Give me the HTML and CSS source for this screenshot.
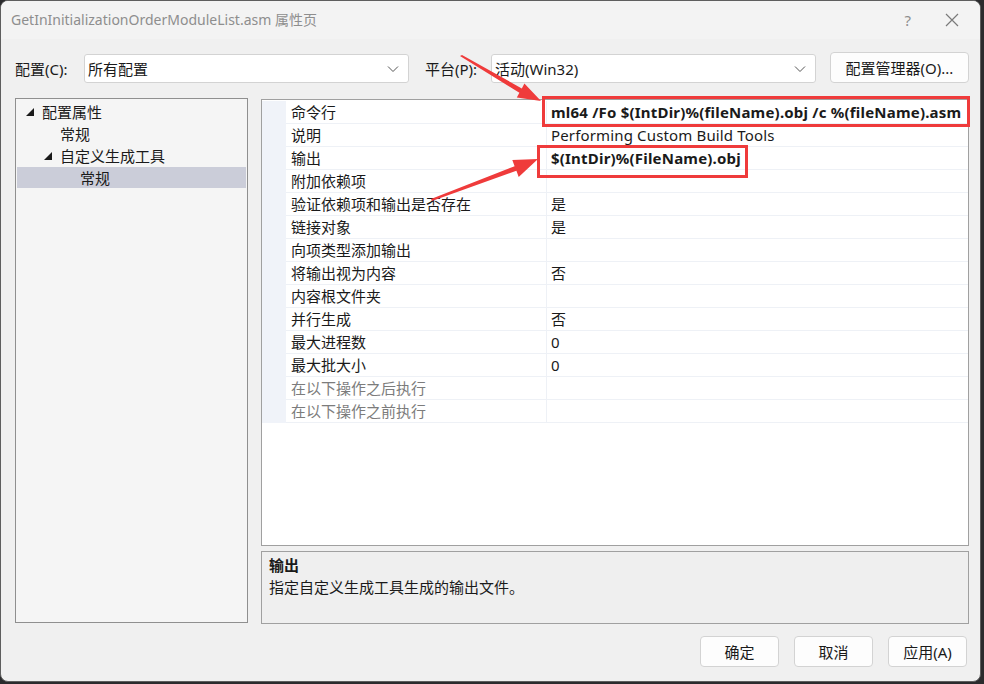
FILE: index.html
```html
<!DOCTYPE html>
<html lang="zh-CN">

<head>
  <meta charset="UTF-8">
  <title>GetInInitializationOrderModuleList.asm 属性页</title>
  <link rel="stylesheet" href="styles.css">
</head>

<body>
  <div class="window">
    <div class="titlebar">
      <span class="title">GetInInitializationOrderModuleList.asm 属性页</span>
      <span class="help">?</span>
      <svg class="close" width="14" height="14" viewBox="0 0 14 14">
        <path d="M1 1 L13 13 M13 1 L1 13" stroke="#7a7a7a" stroke-width="1.2" fill="none"/>
      </svg>
    </div>

    <!-- config / platform row -->
    <div class="toolbar">
      <span class="label">配置(C):</span>
      <div class="combo combo-config">
        <span>所有配置</span>
        <svg width="12" height="8" viewBox="0 0 12 8"><path d="M1 1.5 L6 6.5 L11 1.5" stroke="#555" stroke-width="1" fill="none"/></svg>
      </div>
      <span class="label label-platform">平台(P):</span>
      <div class="combo combo-platform">
        <span>活动(Win32)</span>
        <svg width="12" height="8" viewBox="0 0 12 8"><path d="M1 1.5 L6 6.5 L11 1.5" stroke="#555" stroke-width="1" fill="none"/></svg>
      </div>
      <button class="btn btn-manager">配置管理器(O)...</button>
    </div>

    <div class="main">
      <!-- tree -->
      <div class="tree">
        <div class="node lvl0"><svg class="tri" width="8" height="8" viewBox="0 0 8 8"><path d="M8 0 L8 8 L0 8 Z" fill="#1a1a1a"/></svg>配置属性</div>
        <div class="node lvl1">常规</div>
        <div class="node lvl1b"><svg class="tri" width="8" height="8" viewBox="0 0 8 8"><path d="M8 0 L8 8 L0 8 Z" fill="#1a1a1a"/></svg>自定义生成工具</div>
        <div class="node lvl2 selected">常规</div>
      </div>

      <div class="right">
        <div class="grid">
          <div class="rows">
            <div class="row"><div class="gutter"></div><div class="name">命令行</div><div class="value bold">ml64 /Fo $(IntDir)%(fileName).obj /c %(fileName).asm</div></div>
            <div class="row"><div class="gutter"></div><div class="name">说明</div><div class="value">Performing Custom Build Tools</div></div>
            <div class="row"><div class="gutter"></div><div class="name">输出</div><div class="value bold">$(IntDir)%(FileName).obj</div></div>
            <div class="row"><div class="gutter"></div><div class="name">附加依赖项</div><div class="value"></div></div>
            <div class="row"><div class="gutter"></div><div class="name">验证依赖项和输出是否存在</div><div class="value">是</div></div>
            <div class="row"><div class="gutter"></div><div class="name">链接对象</div><div class="value">是</div></div>
            <div class="row"><div class="gutter"></div><div class="name">向项类型添加输出</div><div class="value"></div></div>
            <div class="row"><div class="gutter"></div><div class="name">将输出视为内容</div><div class="value">否</div></div>
            <div class="row"><div class="gutter"></div><div class="name">内容根文件夹</div><div class="value"></div></div>
            <div class="row"><div class="gutter"></div><div class="name">并行生成</div><div class="value">否</div></div>
            <div class="row"><div class="gutter"></div><div class="name">最大进程数</div><div class="value">0</div></div>
            <div class="row"><div class="gutter"></div><div class="name">最大批大小</div><div class="value">0</div></div>
            <div class="row disabled"><div class="gutter"></div><div class="name">在以下操作之后执行</div><div class="value"></div></div>
            <div class="row disabled"><div class="gutter"></div><div class="name">在以下操作之前执行</div><div class="value"></div></div>
          </div>
        </div>
        <div class="desc">
          <div class="desc-title">输出</div>
          <div class="desc-text">指定自定义生成工具生成的输出文件。</div>
        </div>
      </div>
    </div>

    <div class="buttons">
      <button class="btn">确定</button>
      <button class="btn">取消</button>
      <button class="btn">应用(A)</button>
    </div>
  </div>

  <!-- red annotation marks drawn over the screenshot -->
  <div class="mark mark-cmd"></div>
  <div class="mark mark-out"></div>
  <svg class="arrows" width="984" height="684" viewBox="0 0 984 684">
    <polygon points="460,56 462,55 521.8,88.4 524.4,83.6 541,101 516.8,97.6 519.4,92.8" fill="#ef3b3b"/>
    <polygon points="432,201 431,199 514.6,166.2 512.3,160.1 538,159 518.7,176.9 516.4,170.8" fill="#ef3b3b"/>
  </svg>
</body>

</html>
```

FILE: styles.css
```css
body {
  margin: 0;
  width: 984px;
  height: 684px;
  overflow: hidden;
  position: relative;
  background-color: #2b2b2d;
  font-family: 'Noto Sans', 'Noto Sans CJK SC', sans-serif;
  font-size: 15px;
  color: #1a1a1a;
}

.window {
  width: 981px;
  height: 682px;
  box-sizing: border-box;
  background-color: #f0f0f0;
  border: 1px solid #5e5e5e;
  border-radius: 8px;
  overflow: hidden;
}

.titlebar {
  height: 38px;
  display: flex;
  align-items: center;
  padding-left: 10px;
  background-color: #f3f3f3;
}

.title {
  flex: 1;
  color: #8e8e8e;
  font-size: 14px;
  line-height: 20px;
}

.help {
  color: #8e8e8e;
  font-size: 15px;
  margin-right: 34px;
}

.close {
  margin-right: 21px;
}

/* config row */
.toolbar {
  display: flex;
  align-items: center;
  height: 31px;
  margin-top: 14px;
  padding-left: 14px;
}

.label {
  width: 69px;
  line-height: 20px;
}

.label-platform {
  margin-left: 16px;
  width: 66px;
}

.combo {
  height: 29px;
  box-sizing: border-box;
  background-color: #ffffff;
  border: 1px solid #d3d3d3;
  border-radius: 3px;
  display: flex;
  align-items: center;
  justify-content: space-between;
  padding: 0 9px 0 3px;
  line-height: 20px;
}

.combo-config {
  width: 325px;
}

.combo-platform {
  width: 325px;
}

.btn {
  font-family: 'Noto Sans', 'Noto Sans CJK SC', sans-serif;
  font-size: 15px;
  color: #1a1a1a;
  background-color: #fdfdfd;
  border: 1px solid #d3d3d3;
  border-radius: 4px;
  height: 31px;
  width: 79px;
  padding: 0;
  line-height: 20px;
}

.btn-manager {
  width: 139px;
  margin-left: 14px;
  margin-top: -2px;
}

.main {
  display: flex;
  gap: 13px;
  margin-top: 14px;
  padding-left: 14px;
}

/* tree panel */
.tree {
  width: 233px;
  height: 525px;
  box-sizing: border-box;
  border: 1px solid #8f8f8f;
  background-color: #f5f5f5;
  padding: 2px 1px 0 1px;
}

.node {
  height: 22px;
  line-height: 22px;
  display: flex;
  align-items: center;
}

.tri {
  margin-right: 8px;
}

.lvl0 {
  padding-left: 9px;
}

.lvl1 {
  padding-left: 43px;
}

.lvl1b {
  padding-left: 27px;
}

.lvl2 {
  padding-left: 63px;
}

.selected {
  background-color: #cbcdd9;
  height: 21px;
}

/* property grid */
.right {
  width: 708px;
  display: flex;
  flex-direction: column;
  gap: 5px;
  margin-top: 1px;
}

.grid {
  height: 447px;
  box-sizing: border-box;
  border: 1px solid #a0a0a0;
  background-color: #ffffff;
  padding-top: 1px;
}

.row {
  display: flex;
  height: 23px;
}

.gutter {
  width: 24px;
  background-color: #f0f3f9;
}

.name {
  width: 255px;
  padding-left: 5px;
  line-height: 22px;
  border-bottom: 1px solid #eef1f6;
}

.value {
  flex: 1;
  padding-left: 4px;
  line-height: 22px;
  letter-spacing: 0.15px;
  border-left: 1px solid #eef1f6;
  border-bottom: 1px solid #eef1f6;
  white-space: nowrap;
}

.bold {
  font-weight: bold;
  letter-spacing: 0.2px;
}

.disabled .name {
  color: #7c7c7c;
}

.desc {
  height: 73px;
  box-sizing: border-box;
  border: 1px solid #a0a0a0;
  background-color: #efefef;
  padding: 2px 7px;
}

.desc-title {
  font-weight: bold;
  line-height: 22px;
}

.desc-text {
  line-height: 23px;
}

.buttons {
  display: flex;
  justify-content: flex-end;
  gap: 15px;
  padding-right: 13px;
  margin-top: 12px;
}

/* annotations */
.mark {
  position: absolute;
  border: 3px solid #ef3b3b;
  box-sizing: border-box;
}

.mark-cmd {
  left: 542px;
  top: 96px;
  width: 428px;
  height: 31px;
}

.mark-out {
  left: 537px;
  top: 145px;
  width: 211px;
  height: 33px;
}

.arrows {
  position: absolute;
  left: 0;
  top: 0;
}
```
